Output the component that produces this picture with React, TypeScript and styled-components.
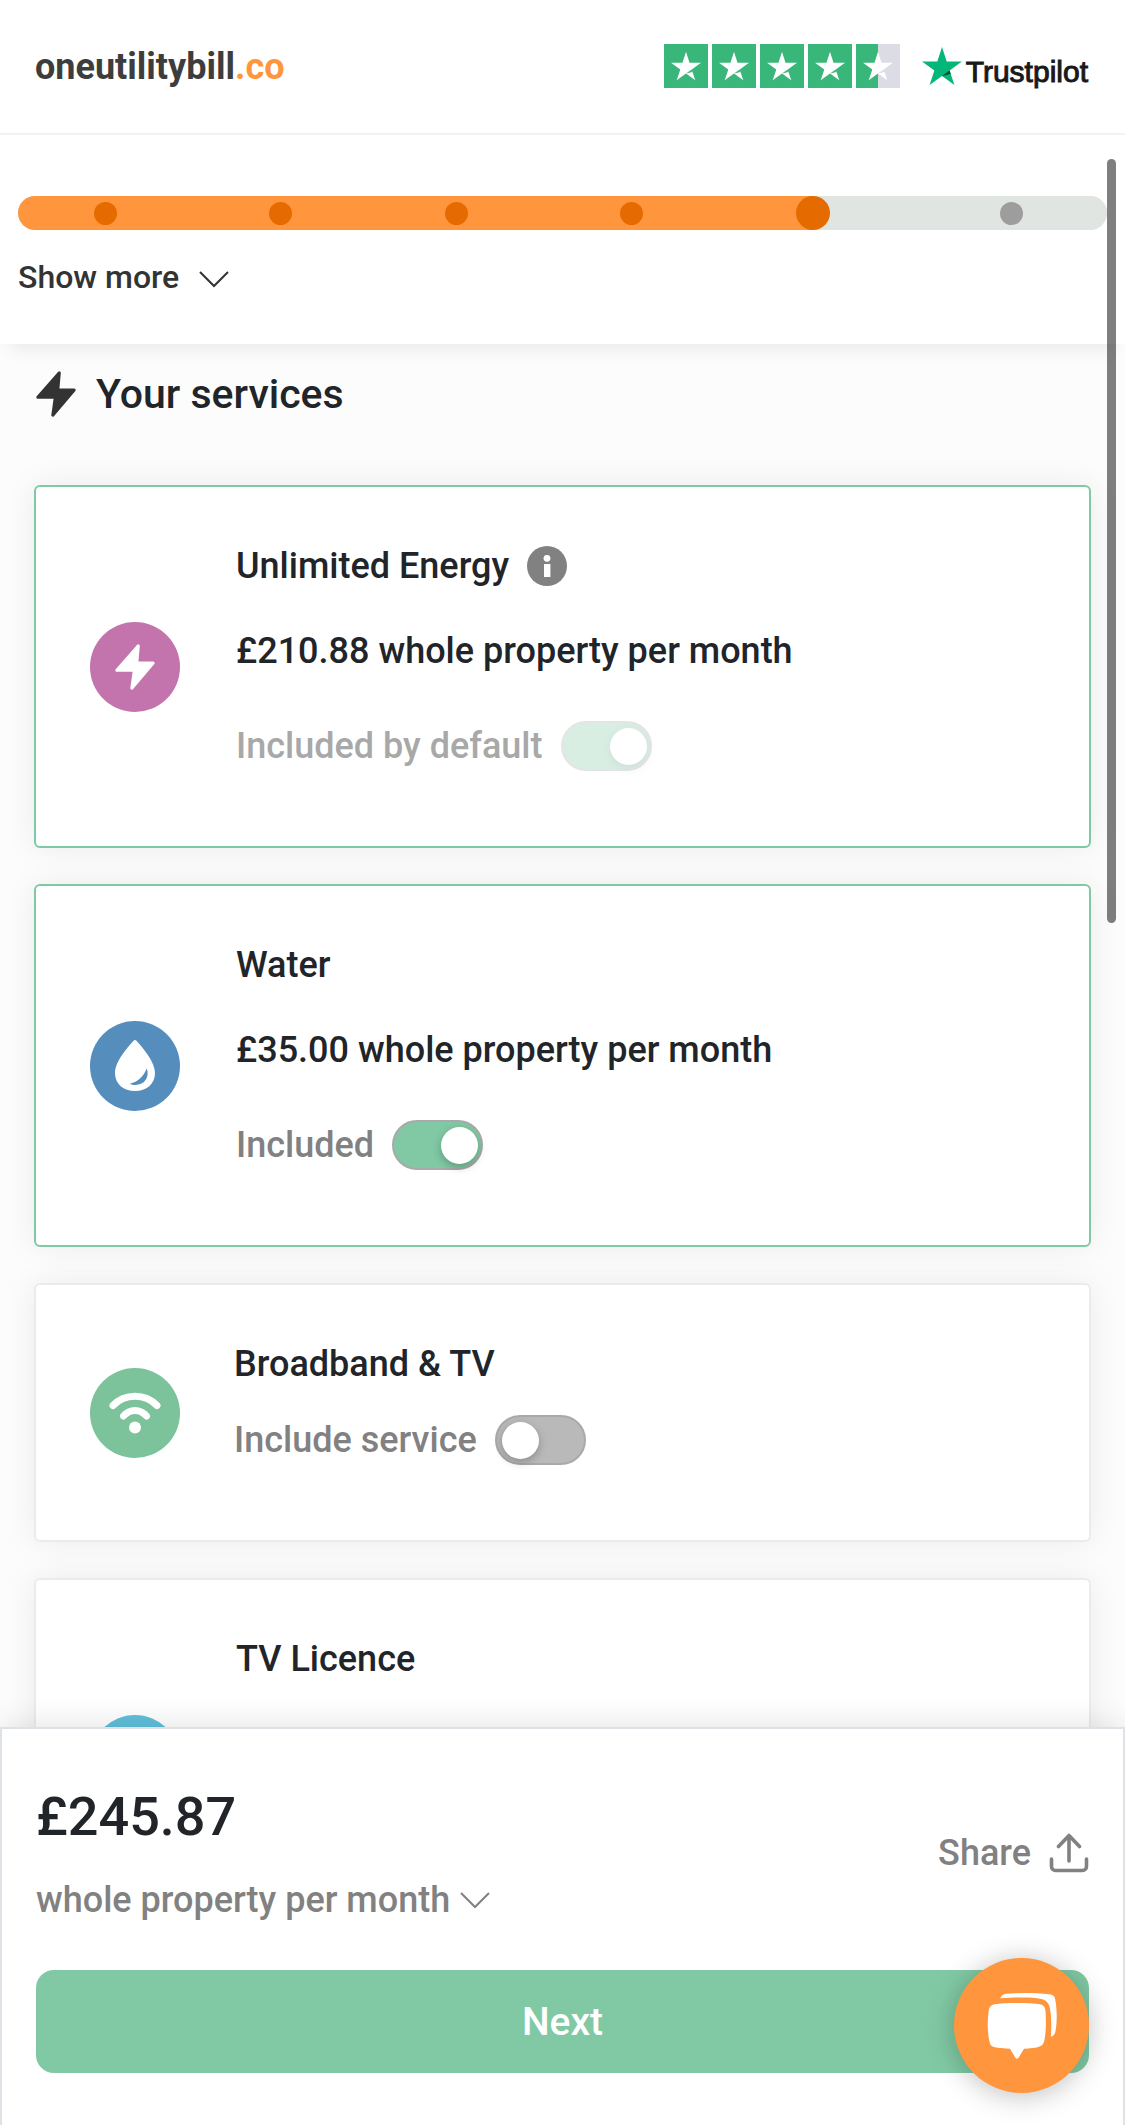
import React, { useState } from "react";
import styled, { createGlobalStyle } from "styled-components";

const GlobalStyle = createGlobalStyle`
  *, *::before, *::after { box-sizing: border-box; }
  body {
    margin: 0;
    background: #fcfcfc;
    color: #212529;
    font-family: Roboto, "Liberation Sans", sans-serif;
    font-weight: 500;
  }
  button { font: inherit; border: 0; padding: 0; cursor: pointer; background: none; color: inherit; }
  svg { display: block; flex: none; }
  h1, h2, p { margin: 0; font-weight: 500; }
`;

const Page = styled.div`
  display: flex;
  flex-direction: column;
  height: 100vh;
  overflow: hidden;
  position: relative;
`;

const Header = styled.header`
  display: flex;
  align-items: center;
  justify-content: space-between;
  height: 135px;
  flex: none;
  padding: 0 37px 0 35px;
  background: #fff;
  border-bottom: 2px solid #f2f2f2;
`;

const Logo = styled.a`
  font-weight: 700;
  font-size: 36px;
  line-height: 40px;
  color: #3d3d3d;
  text-decoration: none;
`;

const LogoSuffix = styled.span`
  color: #ff963d;
`;

const Rating = styled.div`
  display: flex;
  align-items: center;
  gap: 22px;
  margin-bottom: 2px;
`;

const Stars = styled.div`
  display: flex;
  gap: 4px;
`;

const Star = styled.span<{ $half?: boolean }>`
  display: grid;
  place-items: center;
  width: 44px;
  height: 44px;
  background: ${(p) => (p.$half ? "linear-gradient(90deg, #39b67a 50%, #dcdce6 50%)" : "#39b67a")};
`;

const Trustpilot = styled.a`
  display: flex;
  align-items: center;
  gap: 4px;
  font-family: "Liberation Sans", Arial, sans-serif;
  font-weight: 400;
  font-size: 30px;
  line-height: 40px;
  color: #191919;
  text-decoration: none;
`;

const TrustpilotName = styled.span`
  padding-top: 12px;
  -webkit-text-stroke: 1px currentColor;
`;

const Progress = styled.nav`
  flex: none;
  display: flex;
  flex-direction: column;
  align-items: flex-start;
  gap: 23px;
  padding: 61px 18px 43px;
  background: #fff;
  position: relative;
  z-index: 1;
  box-shadow: 0 16px 16px -10px rgba(0, 0, 0, 0.07);
`;

const Track = styled.ol`
  display: grid;
  grid-template-columns: repeat(4, 1fr) 188px 200px;
  width: 100%;
  height: 34px;
  margin: 0;
  padding: 0;
  list-style: none;
  border-radius: 17px;
  overflow: hidden;
  background: #e0e5e1;
`;

type StepState = "done" | "current" | "todo";

const Step = styled.li<{ $state: StepState }>`
  display: flex;
  align-items: center;
  justify-content: center;
  padding-left: ${(p) => (p.$state === "todo" ? 8 : 0)}px;
  background: ${(p) =>
    p.$state === "done"
      ? "#ff963d"
      : p.$state === "current"
        ? "linear-gradient(90deg, #ff963d 50%, #e0e5e1 50%)"
        : "#e0e5e1"};
`;

const Dot = styled.span<{ $state: StepState }>`
  width: ${(p) => (p.$state === "current" ? 34 : 23)}px;
  height: ${(p) => (p.$state === "current" ? 34 : 23)}px;
  border-radius: 50%;
  background: ${(p) => (p.$state === "todo" ? "#9d9d9d" : "#e56a00")};
`;

const ShowMore = styled.button`
  display: flex;
  align-items: center;
  gap: 20px;
  font-size: 32px;
  line-height: 48px;
  color: #333;

  svg {
    margin-top: 4px;
  }
`;

const Content = styled.main`
  flex: 1;
  min-height: 0;
  overflow-y: auto;
  scrollbar-width: none;
  padding: 26px 34px 36px;
`;

const Heading = styled.h1`
  display: flex;
  align-items: center;
  gap: 20px;
  margin-bottom: 67px;
  font-size: 41px;
  line-height: 48px;
  padding-left: 2px;
`;

const CardList = styled.div`
  display: flex;
  flex-direction: column;
  gap: 36px;
`;

const Card = styled.section<{ $selected: boolean; $compact: boolean }>`
  display: flex;
  align-items: center;
  gap: ${(p) => (p.$compact ? 54 : 56)}px;
  min-height: ${(p) => (p.$compact ? 259 : 363)}px;
  padding: 0 54px;
  background: #fff;
  border: 2px solid ${(p) => (p.$selected ? "#80c9a4" : "#ebebeb")};
  border-radius: 6px;
  box-shadow: 0 0 32px rgba(0, 0, 0, 0.07);
`;

const Badge = styled.span<{ $color: string }>`
  display: grid;
  place-items: center;
  flex: none;
  width: 90px;
  height: 90px;
  border-radius: 50%;
  background: ${(p) => p.$color};
`;

const Details = styled.div`
  align-self: flex-start;
  padding: 52px 0 73px;
  font-size: 36px;
  line-height: 54px;
`;

const CardTitle = styled.h2`
  display: flex;
  align-items: center;
  gap: 18px;
  font-size: 36px;
`;

const InfoButton = styled.button`
  border-radius: 50%;
`;

const Price = styled.p`
  margin-top: 31px;
`;

const ToggleRow = styled.label<{ $gap: number; $disabled?: boolean }>`
  display: flex;
  align-items: center;
  gap: 18px;
  margin-top: ${(p) => p.$gap}px;
  color: ${(p) => (p.$disabled ? "#a8a8a8" : "#818181")};
`;

const Switch = styled.input`
  appearance: none;
  display: flex;
  align-items: center;
  flex: none;
  width: 91px;
  height: 50px;
  margin: 0;
  padding: 0 5px;
  border: 2px solid #a9a9a9;
  border-radius: 25px;
  background: #b9b9b9;

  &::before {
    content: "";
    width: 37px;
    height: 37px;
    border-radius: 50%;
    background: #fff;
    box-shadow: 0 3px 9px rgba(0, 0, 0, 0.25);
  }
  &:checked {
    justify-content: flex-end;
    padding: 0 3px;
    background: #80c9a4;
  }
  &:disabled {
    opacity: 0.3;
  }
`;

const Footer = styled.footer`
  flex: none;
  position: relative;
  z-index: 1;
  padding: 56px 34px 52px;
  background: #fff;
  border: 2px solid #dee2e6;
  border-bottom: 0;
  box-shadow: 0 0 32px rgba(0, 0, 0, 0.12);
`;

const Summary = styled.div`
  display: flex;
  align-items: center;
  justify-content: space-between;
  margin-bottom: 43px;
`;

const Total = styled.p`
  margin-bottom: 24px;
  font-size: 54px;
  line-height: 64px;
`;

const TextButton = styled.button<{ $gap: number }>`
  display: flex;
  align-items: center;
  gap: ${(p) => p.$gap}px;
  font-size: 36px;
  line-height: 54px;
  color: #818181;
`;

const ShareButton = styled(TextButton)`
  padding-bottom: 6px;
`;

const NextButton = styled.button`
  display: block;
  width: 100%;
  height: 103px;
  border-radius: 18px;
  background: #81c9a4;
  color: #fff;
  font-size: 39px;
  line-height: 48px;
`;

const ChatButton = styled.button`
  position: fixed;
  right: 36px;
  bottom: 32px;
  z-index: 2;
  display: grid;
  place-items: center;
  width: 135px;
  height: 135px;
  border-radius: 50%;
  background: #ff963d;
  box-shadow: 0 3px 28px rgba(0, 0, 0, 0.25);
`;

const ScrollThumb = styled.div`
  position: absolute;
  top: 159px;
  right: 9px;
  z-index: 3;
  width: 9px;
  height: 764px;
  border-radius: 5px;
  background: rgba(0, 0, 0, 0.5);
`;

const StarShape = ({ size, color, notch }: { size: number; color: string; notch: string }) => (
  <svg width={size} height={size} viewBox="0 0 40 38" aria-hidden="true">
    <path fill={color} d="M20 0l4.7 14.5H40L27.6 23.5 32.4 38 20 29 7.6 38l4.8-14.5L0 14.5h15.3z" />
    <path fill={notch} d="M28.7 26.9l-1.1-3.4L20 29z" />
  </svg>
);

const Bolt = ({ color }: { color: string }) => (
  <svg width="40" height="46" viewBox="0 0 40 46" aria-hidden="true">
    <path
      fill={color}
      stroke={color}
      strokeWidth="3"
      strokeLinejoin="round"
      d="M23.3 1.8L21.8 19H38.2L16.8 44.2L19.3 26.3H1.8z"
    />
  </svg>
);

const Drop = () => (
  <svg width="40" height="51" viewBox="0 0 40 51" aria-hidden="true">
    <path fill="#fff" d="M18.5.8c.9-1 2.1-1 3 0C28 8 40 22 40 33c0 11-8.500 18-20 18S0 44 0 33C0 22 12 8 18.500.8z" />
    <path fill="#558ebd" d="M31.800 28.500c3 8-2 16.500-11.500 16.500-2 0-4-.4-5.300-1.600C23 42 28 37 31.800 28.500z" />
  </svg>
);

const Wifi = () => (
  <svg width="52" height="42" viewBox="0 0 52 42" fill="none" stroke="#fff" strokeWidth="7" strokeLinecap="round" aria-hidden="true">
    <path d="M4 13.500C16 1.200 36 1.200 48 13.500" />
    <path d="M14.500 24c6.500-7.500 16.500-7.500 23 0" />
    <circle cx="26" cy="35.500" r="6" fill="#fff" stroke="none" />
  </svg>
);

const Chevron = () => (
  <svg width="30" height="17" viewBox="0 0 30 17" fill="none" stroke="currentColor" strokeWidth="2" aria-hidden="true">
    <path d="M1 1l14 14L29 1" />
  </svg>
);

const Info = () => (
  <svg width="40" height="40" viewBox="0 0 40 40" aria-hidden="true">
    <circle cx="20" cy="20" r="20" fill="#818181" />
    <circle cx="20" cy="12.300" r="3.400" fill="#fff" />
    <path fill="#fff" d="M17 18h6.400v13H17z" />
  </svg>
);

const Share = () => (
  <svg width="40" height="40" viewBox="0 0 40 40" fill="none" stroke="currentColor" strokeWidth="3.600" strokeLinecap="round" strokeLinejoin="round" aria-hidden="true">
    <path d="M20 28V3M9.500 13.500L20 2.500l10.500 11M2.500 26v7.500a4 4 0 0 0 4 4h27a4 4 0 0 0 4-4V26" />
  </svg>
);

const Chat = () => (
  <svg width="70" height="66" viewBox="0 0 70 66" fill="#fff" aria-hidden="true">
    <path d="M30 10c10 0 18 .4 23 1.300 3.600.7 5 2.700 5.400 6 .8 7 .8 23-1 30-.9 4-2.400 5.700-6 6.700-4 1-8 1.300-14.400 1.700l-5.500 9c-.9 1.500-2.200 1.500-3.100 0L23 55.700c-6-.3-12-.7-16-1.700-3-.8-4-2.500-4.600-5.700C.2 38 .3 27 1.800 17.300 2.400 13.700 4 12 7.500 11.300 13 10.400 20 10 30 10z" />
    <path d="M13.500 4.500C14.800 2.500 16.300 1 19 .8 34-.4 49-.2 62 1.300c4 .5 5.700 1.700 6.300 5.500 1.700 10 2 21 .3 31-.6 3.200-2 5.200-4.700 5.900C64.500 34 64.500 24 63 15.500c-.7-4.500-3.500-8.300-8.500-9.500C46 4.200 27 4.100 13.500 5.300z" />
  </svg>
);

const steps: StepState[] = ["done", "done", "done", "done", "current", "todo"];

type Service = {
  name: string;
  color: string;
  icon?: React.ReactNode;
  price?: string;
  info?: boolean;
  included?: boolean;
  locked?: boolean;
  compact?: boolean;
};

const services: Service[] = [
  { name: "Unlimited Energy", color: "#c374ad", icon: <Bolt color="#fff" />, price: "£210.88", info: true, included: true, locked: true },
  { name: "Water", color: "#558ebd", icon: <Drop />, price: "£35.00", included: true },
  { name: "Broadband & TV", color: "#7cc29a", icon: <Wifi />, included: false, compact: true },
  { name: "TV Licence", color: "#60bfdb" },
];

const ServiceCard = ({ service }: { service: Service }) => {
  const [included, setIncluded] = useState(Boolean(service.included));
  const label = service.locked ? "Included by default" : included ? "Included" : "Include service";
  return (
    <Card $selected={included} $compact={Boolean(service.compact)}>
      <Badge $color={service.color}>{service.icon}</Badge>
      <Details>
        <CardTitle>
          {service.name}
          {service.info && (
            <InfoButton type="button" aria-label={`About ${service.name}`}>
              <Info />
            </InfoButton>
          )}
        </CardTitle>
        {service.price && <Price>{service.price} whole property per month</Price>}
        {service.included !== undefined && (
          <ToggleRow $gap={service.compact ? 22 : 41} $disabled={service.locked}>
            {label}
            <Switch
              type="checkbox"
              checked={included}
              disabled={service.locked}
              onChange={(e) => setIncluded(e.target.checked)}
            />
          </ToggleRow>
        )}
      </Details>
    </Card>
  );
};

export default function App() {
  return (
    <Page>
      <GlobalStyle />
      <Header>
        <Logo href="#">
          oneutilitybill<LogoSuffix>.co</LogoSuffix>
        </Logo>
        <Rating>
          <Stars role="img" aria-label="Rated 4.5 out of 5">
            {[1, 2, 3, 4, 5].map((n) => (
              <Star key={n} $half={n === 5}>
                <StarShape size={30} color="#fff" notch={n === 5 ? "#dcdce6" : "#39b67a"} />
              </Star>
            ))}
          </Stars>
          <Trustpilot href="#">
            <StarShape size={40} color="#04b67a" notch="#045128" />
            <TrustpilotName>Trustpilot</TrustpilotName>
          </Trustpilot>
        </Rating>
      </Header>
      <Progress aria-label="Progress">
        <Track>
          {steps.map((state, i) => (
            <Step key={i} $state={state} aria-current={state === "current" ? "step" : undefined}>
              <Dot $state={state} />
            </Step>
          ))}
        </Track>
        <ShowMore type="button">
          Show more
          <Chevron />
        </ShowMore>
      </Progress>
      <Content>
        <Heading>
          <Bolt color="#333" />
          Your services
        </Heading>
        <CardList>
          {services.map((s) => (
            <ServiceCard key={s.name} service={s} />
          ))}
        </CardList>
      </Content>
      <Footer>
        <Summary>
          <div>
            <Total>£245.87</Total>
            <TextButton type="button" $gap={10}>
              whole property per month
              <Chevron />
            </TextButton>
          </div>
          <ShareButton type="button" $gap={18}>
            Share
            <Share />
          </ShareButton>
        </Summary>
        <NextButton type="button">Next</NextButton>
      </Footer>
      <ChatButton type="button" aria-label="Open chat">
        <Chat />
      </ChatButton>
      <ScrollThumb />
    </Page>
  );
}
